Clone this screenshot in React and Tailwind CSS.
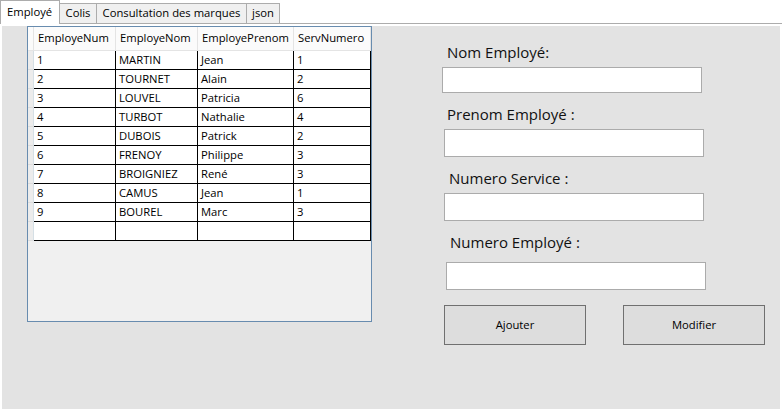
import React from 'react';

// ===== données de la grille =====
const employes = [
  { num: '1', nom: 'MARTIN', prenom: 'Jean', serv: '1' },
  { num: '2', nom: 'TOURNET', prenom: 'Alain', serv: '2' },
  { num: '3', nom: 'LOUVEL', prenom: 'Patricia', serv: '6' },
  { num: '4', nom: 'TURBOT', prenom: 'Nathalie', serv: '4' },
  { num: '5', nom: 'DUBOIS', prenom: 'Patrick', serv: '2' },
  { num: '6', nom: 'FRENOY', prenom: 'Philippe', serv: '3' },
  { num: '7', nom: 'BROIGNIEZ', prenom: 'René', serv: '3' },
  { num: '8', nom: 'CAMUS', prenom: 'Jean', serv: '1' },
  { num: '9', nom: 'BOUREL', prenom: 'Marc', serv: '3' },
  { num: '', nom: '', prenom: '', serv: '' },
];

const columns = [
  { key: 'num', label: 'EmployeNum', w: 'w-[82px]' },
  { key: 'nom', label: 'EmployeNom', w: 'w-[82px]' },
  { key: 'prenom', label: 'EmployePrenom', w: 'w-[96px]' },
  { key: 'serv', label: 'ServNumero', w: 'w-[77px]' },
];

function Tabs() {
  return (
    <div className="flex items-end h-[24px] text-[11.25px]">
      <div className="h-[24px] w-[60px] border-l border-t border-r border-[#acacac] bg-white flex items-center pl-[6px]">
        Employé
      </div>
      <div className="h-[21px] w-[37px] border-t border-r border-b border-[#acacac] bg-[#f0f0f0] flex items-center justify-center">
        Colis
      </div>
      <div className="h-[21px] w-[150px] border-t border-r border-b border-[#acacac] bg-[#f0f0f0] flex items-center justify-center">
        Consultation des marques
      </div>
      <div className="h-[21px] w-[33px] border-t border-r border-b border-[#acacac] bg-[#f0f0f0] flex items-center justify-center">
        json
      </div>
      <div className="flex-1 border-b border-[#acacac]" />
    </div>
  );
}

function Grid() {
  return (
    <div className="w-[345px] h-[296px] border border-[#688caf] bg-[#f0f0f0] text-[11.25px] flex flex-col">
      {/* Header */}
      <div className="flex h-[24px] bg-[#fbfbfb] border-b border-[#e4e4e4]">
        <div className="w-[6px] border-r border-[#e4e4e4]" />
        {columns.map(c => (
          <div key={c.key} className={`${c.w} border-r border-[#e4e4e4] flex items-center pl-[4px] whitespace-nowrap`}>
            {c.label}
          </div>
        ))}
      </div>
      {/* Lignes */}
      {employes.map((e, i) => (
        <div key={i} className="flex h-[19px]">
          <div className="w-[6px] bg-[#ececec] border-r border-[#d5dfe5] border-b border-b-[#dcdcdc]" />
          {columns.map(c => (
            <div key={c.key} className={`${c.w} bg-white border-r border-b border-black flex items-center pl-[3px] whitespace-nowrap`}>
              {e[c.key]}
            </div>
          ))}
        </div>
      ))}
    </div>
  );
}

function Field({ label, labelMl, inputMl, mt, inputMt, h }) {
  return (
    <>
      <label className={`${mt} ${labelMl} leading-[20px] h-[20px] text-[15px] text-[#111]`}>{label}</label>
      <input className={`${inputMt} ${inputMl} ${h} w-[260px] border border-[#ababab] bg-white outline-none`} />
    </>
  );
}

export default function App() {
  return (
    <div className="w-[782px] h-[411px] bg-white text-black font-['Open_Sans',sans-serif] overflow-hidden">
      <Tabs />
      <div className="mt-[2px] ml-[2px] w-[778px] h-[383px] bg-[#e3e3e3] flex">
        <div className="ml-[25px]">
          <Grid />
        </div>

        {/* Formulaire */}
        <div className="ml-[70px] flex flex-col items-start">
          <Field label="Nom Employé:" mt="mt-[16px]" labelMl="ml-[5px]" inputMt="mt-[5px]" inputMl="ml-0" h="h-[26px]" />
          <Field label="Prenom Employé :" mt="mt-[11px]" labelMl="ml-[5px]" inputMt="mt-[5px]" inputMl="ml-[2px]" h="h-[28px]" />
          <Field label="Numero Service :" mt="mt-[11px]" labelMl="ml-[7px]" inputMt="mt-[5px]" inputMl="ml-[2px]" h="h-[28px]" />
          <Field label="Numero Employé :" mt="mt-[11px]" labelMl="ml-[8px]" inputMt="mt-[10px]" inputMl="ml-[4px]" h="h-[28px]" />
          <div className="mt-[15px] ml-[2px] flex gap-[37px] text-[11.25px]">
            <button className="w-[142px] h-[40px] bg-[#dddddd] border border-[#707070]">Ajouter</button>
            <button className="w-[142px] h-[40px] bg-[#dddddd] border border-[#707070]">Modifier</button>
          </div>
        </div>
      </div>
    </div>
  );
}
